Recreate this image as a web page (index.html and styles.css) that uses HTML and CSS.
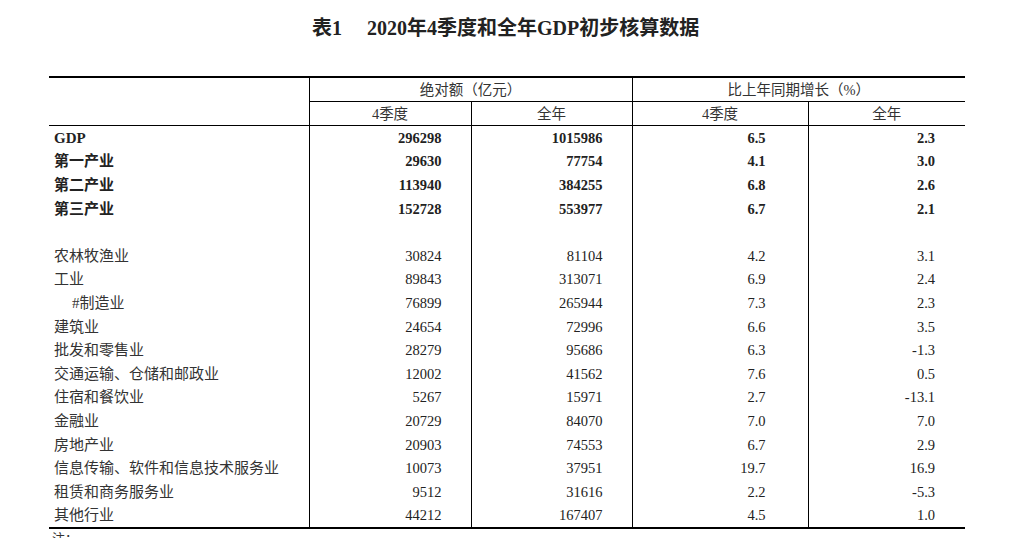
FILE: index.html
```html
<!DOCTYPE html>
<html lang="zh-CN">
<head>
<meta charset="utf-8">
<title>表1 2020年4季度和全年GDP初步核算数据</title>
<link rel="stylesheet" href="styles.css">
</head>
<body>
<div class="page">
  <h1 class="title"><span class="title-no">表1</span><span class="title-text">2020年4季度和全年GDP初步核算数据</span></h1>
  <table class="gdp">
    <colgroup>
      <col class="c-label"><col class="c-a"><col class="c-b"><col class="c-c"><col class="c-d">
    </colgroup>
    <thead>
      <tr class="h1">
        <th class="blank" rowspan="2"></th>
        <th colspan="2" class="grp">绝对额（亿元）</th>
        <th colspan="2" class="grp">比上年同期增长（%）</th>
      </tr>
      <tr class="h2">
        <th>4季度</th><th>全年</th><th>4季度</th><th>全年</th>
      </tr>
    </thead>
    <tbody>
      <tr class="bold"><td class="label">GDP</td><td class="n1">296298</td><td class="n2">1015986</td><td class="n3">6.5</td><td class="n4">2.3</td></tr>
      <tr class="bold"><td class="label">第一产业</td><td class="n1">29630</td><td class="n2">77754</td><td class="n3">4.1</td><td class="n4">3.0</td></tr>
      <tr class="bold"><td class="label">第二产业</td><td class="n1">113940</td><td class="n2">384255</td><td class="n3">6.8</td><td class="n4">2.6</td></tr>
      <tr class="bold"><td class="label">第三产业</td><td class="n1">152728</td><td class="n2">553977</td><td class="n3">6.7</td><td class="n4">2.1</td></tr>
      <tr><td class="label"></td><td></td><td></td><td></td><td></td></tr>
      <tr><td class="label">农林牧渔业</td><td class="n1">30824</td><td class="n2">81104</td><td class="n3">4.2</td><td class="n4">3.1</td></tr>
      <tr><td class="label">工业</td><td class="n1">89843</td><td class="n2">313071</td><td class="n3">6.9</td><td class="n4">2.4</td></tr>
      <tr><td class="label sub">#制造业</td><td class="n1">76899</td><td class="n2">265944</td><td class="n3">7.3</td><td class="n4">2.3</td></tr>
      <tr><td class="label">建筑业</td><td class="n1">24654</td><td class="n2">72996</td><td class="n3">6.6</td><td class="n4">3.5</td></tr>
      <tr><td class="label">批发和零售业</td><td class="n1">28279</td><td class="n2">95686</td><td class="n3">6.3</td><td class="n4">-1.3</td></tr>
      <tr><td class="label">交通运输、仓储和邮政业</td><td class="n1">12002</td><td class="n2">41562</td><td class="n3">7.6</td><td class="n4">0.5</td></tr>
      <tr><td class="label">住宿和餐饮业</td><td class="n1">5267</td><td class="n2">15971</td><td class="n3">2.7</td><td class="n4">-13.1</td></tr>
      <tr><td class="label">金融业</td><td class="n1">20729</td><td class="n2">84070</td><td class="n3">7.0</td><td class="n4">7.0</td></tr>
      <tr><td class="label">房地产业</td><td class="n1">20903</td><td class="n2">74553</td><td class="n3">6.7</td><td class="n4">2.9</td></tr>
      <tr><td class="label">信息传输、软件和信息技术服务业</td><td class="n1">10073</td><td class="n2">37951</td><td class="n3">19.7</td><td class="n4">16.9</td></tr>
      <tr><td class="label">租赁和商务服务业</td><td class="n1">9512</td><td class="n2">31616</td><td class="n3">2.2</td><td class="n4">-5.3</td></tr>
      <tr><td class="label">其他行业</td><td class="n1">44212</td><td class="n2">167407</td><td class="n3">4.5</td><td class="n4">1.0</td></tr>
    </tbody>
  </table>
  <p class="note">注：</p>
</div>
</body>
</html>
```
FILE: styles.css
```css
html, body {
  margin: 0;
  padding: 0;
  background: #fff;
}
body {
  font-family: "Liberation Serif", "Noto Sans CJK SC", serif;
  color: #222;
}
.page {
  padding: 0 0 0 49px;
}
.title {
  margin: 0;
  padding: 16px 0 0 263px;
  height: 60px;
  box-sizing: border-box;
  font-size: 20px;
  line-height: 24px;
  font-weight: bold;
  color: #222;
  font-family: "Liberation Serif", "Noto Sans CJK SC", serif;
}
.title-no {
  margin-right: 25px;
}
.gdp {
  border-collapse: collapse;
  table-layout: fixed;
  width: 916px;
  margin-top: 16px;
  border-top: 2px solid #000;
  border-bottom: 2px solid #000;
}
.c-label { width: 260px; }
.c-a { width: 162px; }
.c-b { width: 161px; }
.c-c { width: 176px; }
.c-d { width: 157px; }
.gdp th {
  font-weight: normal;
  font-size: 14.5px;
  color: #333;
  padding: 0;
  line-height: 20px;
  text-align: center;
  border: 1px solid #000;
}
.gdp th.blank {
  border-left: none;
}
.gdp .h1 th:last-child,
.gdp .h2 th:last-child {
  border-right: none;
}
.gdp .h1 th { height: 23px; border-top: none; }
.gdp .h2 th { height: 23px; }
.gdp td {
  padding: 0;
  height: 23.6px;
  font-size: 14.5px;
  line-height: 18px;
  border-left: 1px solid #000;
  white-space: nowrap;
}
.gdp td.label {
  border-left: none;
  padding-left: 5px;
  color: #333;
  font-size: 15px;
}
.gdp td.sub {
  padding-left: 23px;
}
.gdp tr.bold td {
  font-weight: bold;
  color: #222;
}
.n1, .n2, .n3, .n4 {
  text-align: right;
}
.n1 { padding-right: 29px !important; }
.n2 { padding-right: 29px !important; }
.n3 { padding-right: 42px !important; }
.n4 { padding-right: 30px !important; }
.note {
  margin: 2px 0 0 3px;
  font-size: 13px;
  line-height: 16px;
  color: #333;
}
```
